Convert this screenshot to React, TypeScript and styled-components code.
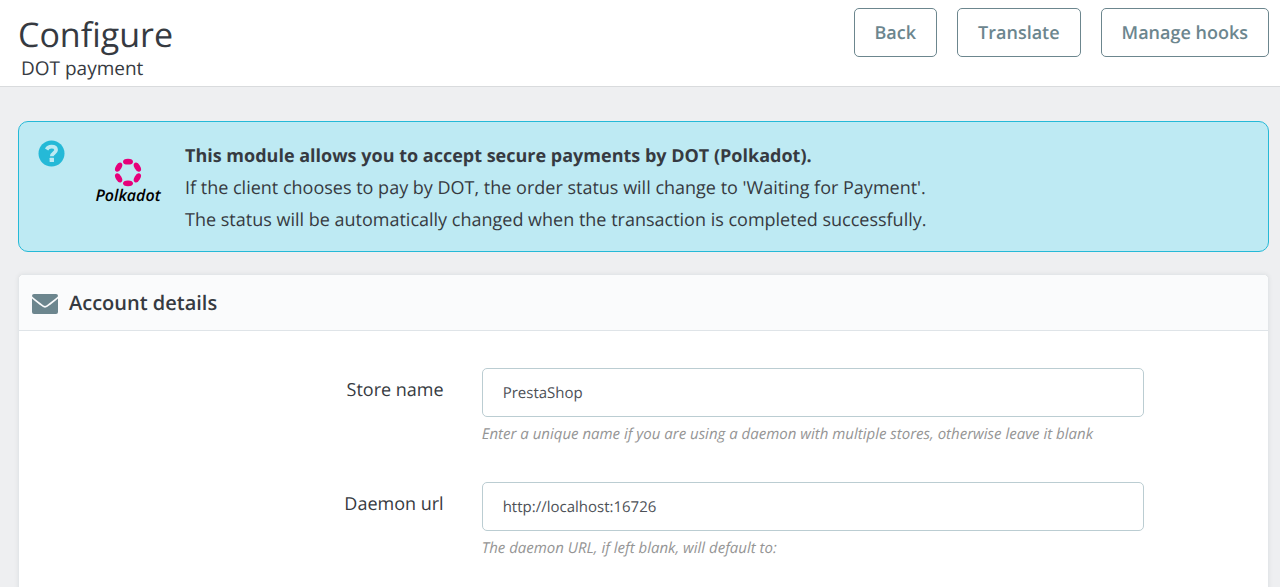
import React from "react";
import styled, { createGlobalStyle } from "styled-components";

const GlobalStyle = createGlobalStyle`
  *, *::before, *::after { box-sizing: border-box; }
  html { background: #eeeff1; }
  body {
    margin: 0;
    color: #363a41;
    font-family: "Open Sans", "Noto Sans", sans-serif;
    font-size: 18px;
    text-rendering: geometricPrecision;
  }
`;

const Header = styled.header`
  display: flex;
  justify-content: space-between;
  align-items: flex-start;
  padding: 8px 11px 6px 18px;
  background: #fff;
  border-bottom: 1px solid #d9dbdd;
`;

const Title = styled.h1`
  margin: 0;
  padding-top: 4px;
  font-size: 34px;
  font-weight: 400;
  line-height: 44px;
`;

const Subtitle = styled.p`
  margin: 0;
  padding-left: 3px;
  font-size: 19px;
  line-height: 24px;
`;

const Toolbar = styled.nav`
  display: flex;
  gap: 20px;
`;

const ToolbarButton = styled.button`
  padding: 1px 20px 0;
  border: 1px solid #6c868e;
  border-radius: 5px;
  background: #fff;
  color: #6c868e;
  font: 600 18px/46px "Open Sans", "Noto Sans", sans-serif;
  text-rendering: inherit;
`;

const Content = styled.main`
  display: flex;
  flex-direction: column;
  gap: 22px;
  padding: 34px 11px 0 18px;
`;

const Notice = styled.section`
  display: flex;
  align-items: flex-start;
  padding: 18px 19px 15px;
  border: 1px solid #25b9d7;
  border-radius: 10px;
  background: #beeaf3;
`;

const HelpIcon = styled.svg`
  width: 27px;
  height: 27px;
`;

const Brand = styled.svg`
  width: 74px;
  height: 50px;
  margin: 18px 20px 0 26px;
`;

const NoticeText = styled.div`
  line-height: 32px;
`;

const Line = styled.p`
  margin: 0;
`;

const Panel = styled.section`
  border: 1px solid #e3e6e9;
  border-radius: 5px;
  background: #fff;
  box-shadow: 0 0 4px rgba(54, 58, 65, 0.08);
`;

const PanelHeading = styled.h2`
  display: flex;
  align-items: center;
  gap: 11px;
  margin: 0;
  padding: 0 13px;
  border-bottom: 1px solid #dfe4e8;
  border-radius: 5px 5px 0 0;
  background: #fafbfc;
  font-size: 20px;
  font-weight: 600;
  line-height: 55px;
`;

const EnvelopeIcon = styled.svg`
  width: 26px;
  height: 20px;
  margin-top: 2px;
`;

const Form = styled.form`
  display: flex;
  flex-direction: column;
  gap: 36px;
  padding: 37px 0;
`;

const Field = styled.div`
  display: grid;
  grid-template-columns: 34% 53%;
  column-gap: 38px;
`;

const Label = styled.label`
  padding-top: 9px;
  line-height: 26px;
  text-align: right;
`;

const Input = styled.input`
  display: block;
  width: 100%;
  height: 49px;
  padding: 0 20px;
  border: 1px solid #bbcdd2;
  border-radius: 5px;
  background: #fff;
  color: #4d5157;
  font: 400 15px "Open Sans", "Noto Sans", sans-serif;
  text-rendering: inherit;
`;

const Hint = styled.p`
  margin: 5px 0 0;
  color: #959595;
  font-size: 15px;
  font-style: italic;
  line-height: 24px;
`;

const petals = [0, 60, 120, 180, 240, 300];

const actions = ["Back", "Translate", "Manage hooks"];

const fields = [
  {
    id: "store-name",
    label: "Store name",
    value: "PrestaShop",
    hint: "Enter a unique name if you are using a daemon with multiple stores, otherwise leave it blank",
  },
  {
    id: "daemon-url",
    label: "Daemon url",
    value: "http://localhost:16726",
    hint: "The daemon URL, if left blank, will default to:",
  },
];

export default function App() {
  return (
    <>
      <GlobalStyle />
      <Header>
        <div>
          <Title>Configure</Title>
          <Subtitle>DOT payment</Subtitle>
        </div>
        <Toolbar>
          {actions.map((name) => (
            <ToolbarButton key={name} type="button">{name}</ToolbarButton>
          ))}
        </Toolbar>
      </Header>
      <Content>
        <Notice>
          <HelpIcon viewBox="0 0 27 27" aria-hidden="true">
            <circle cx="13.5" cy="13.5" r="13" fill="#25b9d7" />
            <path d="M8.6 9.5C9.8 7.4 11.3 6.7 13.4 6.7c2.8 0 4.7 1.3 4.7 3.3 0 2.9-4.3 3-4.3 6.2" fill="none" stroke="#beeaf3" strokeWidth="3.7" />
            <rect x="11.6" y="17.8" width="4.4" height="4.2" rx="0.5" fill="#beeaf3" />
          </HelpIcon>
          <Brand viewBox="0 0 74 50" role="img" aria-label="Polkadot">
            <g fill="#e6007a">
              {petals.map((angle) => (
                <ellipse key={angle} cx="37" cy="3.7" rx="5" ry="2.9" transform={`rotate(${angle} 37 14.5)`} />
              ))}
            </g>
            <text x="37" y="43" textAnchor="middle" fontSize="16" fontStyle="italic" fontWeight="600" fill="#000">Polkadot</text>
          </Brand>
          <NoticeText>
            <Line><strong>This module allows you to accept secure payments by DOT (Polkadot).</strong></Line>
            <Line>If the client chooses to pay by DOT, the order status will change to 'Waiting for Payment'.</Line>
            <Line>The status will be automatically changed when the transaction is completed successfully.</Line>
          </NoticeText>
        </Notice>
        <Panel>
          <PanelHeading>
            <EnvelopeIcon viewBox="0 0 26 20" aria-hidden="true">
              <rect width="26" height="20" rx="2" fill="#6c868e" />
              <path d="M-1 2.4C2 5.4 5.5 8 9 10.7c3.4 2.8 4.6 2.8 8 0C20.5 8 24 5.4 27 2.4" fill="none" stroke="#fafbfc" strokeWidth="1.7" />
            </EnvelopeIcon>
            Account details
          </PanelHeading>
          <Form>
            {fields.map((field) => (
              <Field key={field.id}>
                <Label htmlFor={field.id}>{field.label}</Label>
                <div>
                  <Input id={field.id} type="text" defaultValue={field.value} aria-describedby={`${field.id}-hint`} />
                  <Hint id={`${field.id}-hint`}>{field.hint}</Hint>
                </div>
              </Field>
            ))}
          </Form>
        </Panel>
      </Content>
    </>
  );
}
